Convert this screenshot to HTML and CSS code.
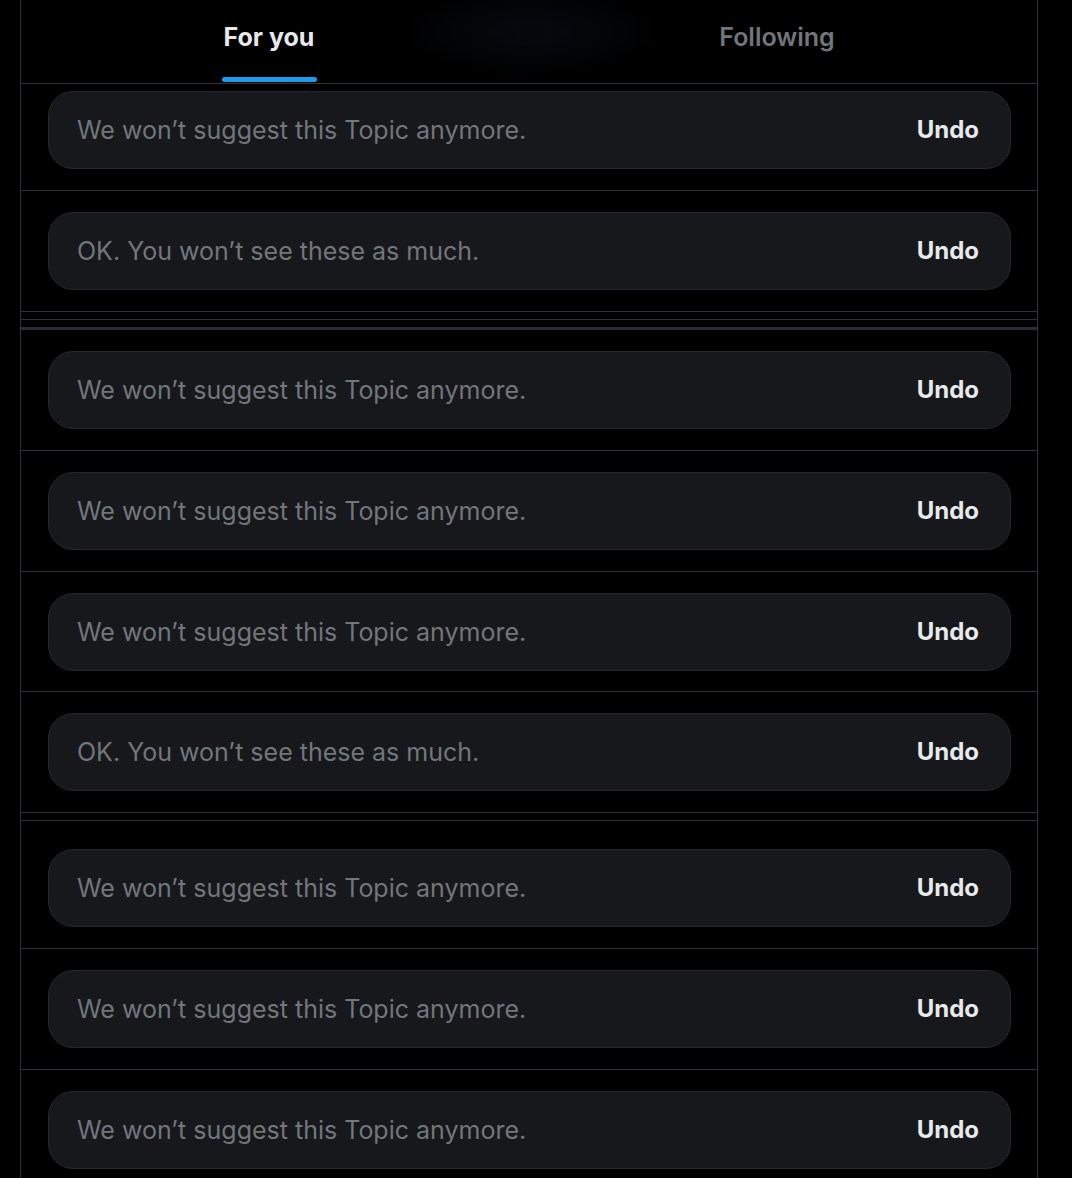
FILE: index.html
```html
<!DOCTYPE html>
<html lang="en">
<head>
<meta charset="utf-8">
<title>Home</title>
<link rel="stylesheet" href="styles.css">
</head>
<body>
<main class="column">
  <header class="tabs-bar">
    <nav class="tabs">
      <a class="tab tab-active"><span class="tab-label">For you</span><span class="tab-indicator"></span></a>
      <a class="tab"><span class="tab-label">Following</span></a>
    </nav>
  </header>

  <section class="feed">
    <div class="cell cell-first"><div class="notice"><span class="notice-text">We won’t suggest this Topic anymore.</span><button class="undo">Undo</button></div></div>
    <div class="cell cell-tight"><div class="notice"><span class="notice-text">OK. You won’t see these as much.</span><button class="undo">Undo</button></div></div>
    <div class="divider divider-a"><div class="rule"></div><div class="rule rule-thick"></div></div>
    <div class="cell"><div class="notice"><span class="notice-text">We won’t suggest this Topic anymore.</span><button class="undo">Undo</button></div></div>
    <div class="cell"><div class="notice"><span class="notice-text">We won’t suggest this Topic anymore.</span><button class="undo">Undo</button></div></div>
    <div class="cell"><div class="notice"><span class="notice-text">We won’t suggest this Topic anymore.</span><button class="undo">Undo</button></div></div>
    <div class="cell"><div class="notice"><span class="notice-text">OK. You won’t see these as much.</span><button class="undo">Undo</button></div></div>
    <div class="divider divider-b"><div class="rule"></div></div>
    <div class="cell"><div class="notice"><span class="notice-text">We won’t suggest this Topic anymore.</span><button class="undo">Undo</button></div></div>
    <div class="cell"><div class="notice"><span class="notice-text">We won’t suggest this Topic anymore.</span><button class="undo">Undo</button></div></div>
    <div class="cell"><div class="notice"><span class="notice-text">We won’t suggest this Topic anymore.</span><button class="undo">Undo</button></div></div>
  </section>
</main>
</body>
</html>
```

FILE: styles.css
```css
* {
  box-sizing: border-box;
}

html, body {
  margin: 0;
  padding: 0;
  background: #000000;
}

body {
  font-family: Inter, "Noto Sans", "Liberation Sans", sans-serif;
  color: #e7e9ea;
  overflow: hidden;
}

.column {
  margin-left: 20px;
  width: 1018px;
  min-height: 1178px;
  border-left: 1px solid #2f3336;
  border-right: 1px solid #2f3336;
}

.tabs-bar {
  height: 84px;
  border-bottom: 1px solid #2f3336;
  background:
    radial-gradient(ellipse 130px 45px at 510px 32px, rgba(6, 11, 17, 0.85), rgba(0, 0, 0, 0) 100%),
    #000000;
}

.tabs {
  display: grid;
  grid-template-columns: 1fr 1fr;
  margin: 0 6px 0 -6px;
  height: 83px;
}

.tab {
  display: flex;
  flex-direction: column;
  align-items: center;
  padding-top: 22px;
  font-size: 25px;
  line-height: 30px;
  font-weight: 600;
  color: #71767b;
  text-decoration: none;
}

.tab-active {
  font-weight: 700;
  color: #e7e9ea;
}

.tab-indicator {
  display: block;
  width: 95px;
  height: 5px;
  margin-top: 25px;
  border-radius: 3px;
  background: #1d9bf0;
}

.feed {
  display: flex;
  flex-direction: column;
}

.cell {
  padding: 21px 26px 20.75px 27px;
  border-bottom: 1px solid #2f3336;
}

.cell-first {
  padding-top: 7px;
  padding-bottom: 21px;
}

.cell-tight {
  padding-top: 21px;
  padding-bottom: 21px;
}

.notice {
  display: flex;
  align-items: center;
  justify-content: space-between;
  height: 78px;
  padding: 0 31px 0 28px;
  background: #16181c;
  border: 1px solid #25282c;
  border-radius: 25px;
}

.notice-text {
  font-size: 25px;
  line-height: 30px;
  color: #71767b;
}

.undo {
  padding: 0;
  border: 0;
  background: none;
  font-family: inherit;
  font-size: 24px;
  line-height: 30px;
  font-weight: 700;
  color: #e7e9ea;
  cursor: pointer;
}

.divider {
  display: flex;
  flex-direction: column;
  gap: 7px;
  padding-top: 7px;
}

.divider-b {
  padding-bottom: 7px;
}

.rule {
  height: 1px;
  background: #2f3336;
}

.rule-thick {
  height: 3px;
  background: #2a2d31;
}
```
